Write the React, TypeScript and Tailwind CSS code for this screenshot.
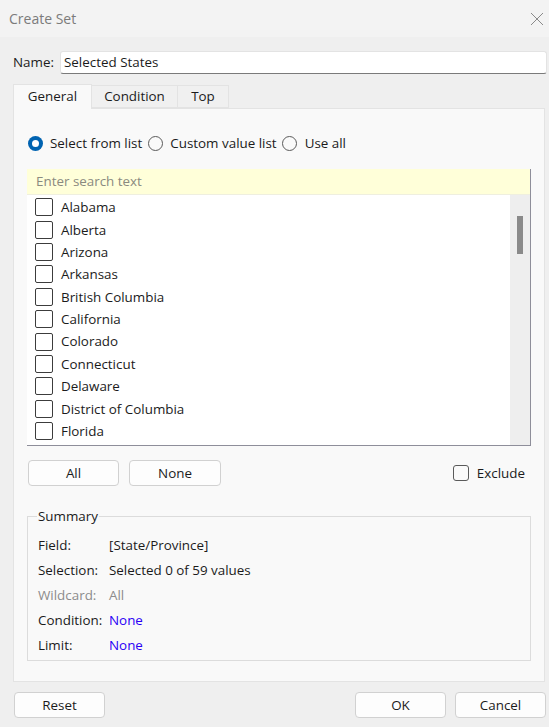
import React from 'react';

const states = [
  'Alabama',
  'Alberta',
  'Arizona',
  'Arkansas',
  'British Columbia',
  'California',
  'Colorado',
  'Connecticut',
  'Delaware',
  'District of Columbia',
  'Florida',
];

const Checkbox = () => (
  <span className="block w-[18px] h-[18px] border-[1.5px] border-[#3c3c3c] rounded-[2px] bg-white shrink-0" />
);

const Radio = ({ checked }: { checked?: boolean }) =>
  checked ? (
    <span className="flex items-center justify-center w-[15px] h-[15px] rounded-full bg-[#0063b1] shrink-0">
      <span className="block w-[7px] h-[7px] rounded-full bg-white" />
    </span>
  ) : (
    <span className="block w-[15px] h-[15px] rounded-full border border-[#5a5a5a] bg-[#fafafa] shrink-0" />
  );

const Button = ({ label, className = '' }: { label: string; className?: string }) => (
  <button
    className={`h-[26px] rounded-[4px] border border-[#d1d1d1] bg-[#fdfdfd] text-[#1b1b1b] ${className}`}
  >
    {label}
  </button>
);

const SummaryRow = ({ label, value, tone = 'normal' }: { label: string; value: string; tone?: 'normal' | 'muted' | 'link' }) => {
  const labelColor = tone === 'muted' ? 'text-[#8c8c8c]' : 'text-[#1b1b1b]';
  const valueColor = tone === 'muted' ? 'text-[#8c8c8c]' : tone === 'link' ? 'text-[#2a00f5]' : 'text-[#1b1b1b]';
  return (
    <div className="flex items-center h-[25px]">
      <span className={`w-[71px] ${labelColor}`}>{label}</span>
      <span className={valueColor}>{value}</span>
    </div>
  );
};

export default function App() {
  return (
    <div className="w-[549px] h-[727px] bg-[#efefef] flex flex-col text-[13.4px] text-[#1b1b1b] font-['Open_Sans',sans-serif] overflow-hidden">
      {/* title bar */}
      <div className="h-[37px] bg-[#f3f3f3] flex items-center justify-between pl-[9px] pr-[3px]">
        <span className="text-[#7b7b7b] text-[14px]">Create Set</span>
        <svg width="16" height="16" viewBox="0 0 16 16" className="mr-[1px]">
          <path d="M2 2 L14 14 M14 2 L2 14" stroke="#8a8a8a" strokeWidth="1" />
        </svg>
      </div>

      {/* name */}
      <div className="flex items-center pl-[13px] pr-[2px] mt-[14px]">
        <span className="w-[47px]">Name:</span>
        <div className="flex-1 h-[23px] bg-white border border-[#e3e3e3] border-b-[#7a7a7a] rounded-[3px] flex items-center px-[3px]">
          Selected States
        </div>
      </div>

      {/* tabs */}
      <div className="flex items-end ml-[13px] mt-[9px] h-[25px]">
        <div className="w-[79px] h-[25px] bg-[#f9f9f9] border border-b-0 border-[#e3e3e3] flex items-center justify-center relative z-10 -mb-px pb-[2px]">
          General
        </div>
        <div className="w-[86px] h-[23px] bg-[#f0f0f0] border border-l-0 border-[#e3e3e3] flex items-center justify-center">
          Condition
        </div>
        <div className="w-[51px] h-[23px] bg-[#f0f0f0] border border-l-0 border-[#e3e3e3] flex items-center justify-center">
          Top
        </div>
      </div>

      {/* panel */}
      <div className="ml-[13px] mr-[4px] h-[574px] bg-[#f9f9f9] border border-[#e3e3e3] flex flex-col px-[13px]">
        <div className="flex items-center mt-[26px] h-[16px]">
          <span className="ml-[1px]"><Radio checked /></span>
          <span className="ml-[7px] mr-[6px]">Select from list</span>
          <Radio />
          <span className="ml-[7px] mr-[5px]">Custom value list</span>
          <Radio />
          <span className="ml-[8px]">Use all</span>
        </div>

        {/* list */}
        <div className="mt-[18px] w-[504px] h-[277px] border border-[#8e8e9a] border-t-0 border-l-0 flex flex-col">
          <div className="h-[26px] bg-[#ffffd9] border-b border-[#efefdf] flex items-center pl-[9px] text-[#8a8a80] shrink-0">
            Enter search text
          </div>
          <div className="flex flex-1 min-h-0">
            <div className="flex-1 bg-white overflow-hidden pt-[1px]">
              {states.map((s) => (
                <div key={s} className="flex items-center h-[22.4px] pl-[8px] gap-[8px]">
                  <Checkbox />
                  <span>{s}</span>
                </div>
              ))}
            </div>
            <div className="w-[20px] bg-[#eeeeee] pt-[21px] flex justify-center">
              <div className="w-[6px] h-[38px] bg-[#8a8a8a]" />
            </div>
          </div>
        </div>

        {/* buttons row */}
        <div className="flex items-center mt-[14px]">
          <Button label="All" className="w-[91px] ml-[1px]" />
          <Button label="None" className="w-[92px] ml-[10px]" />
          <div className="ml-auto flex items-center gap-[8px] mr-[6px]">
            <span className="block w-[16px] h-[16px] rounded-[3px] border border-[#5a5a5a] bg-[#fafafa]" />
            <span>Exclude</span>
          </div>
        </div>

        {/* summary */}
        <fieldset className="mt-[20px] w-[504px] border border-[#dcdcdc] pl-[10px] pb-[3px] pt-[6px]">
          <legend className="px-[1px] -ml-[1px]">Summary</legend>
          <SummaryRow label="Field:" value="[State/Province]" />
          <SummaryRow label="Selection:" value="Selected 0 of 59 values" />
          <SummaryRow label="Wildcard:" value="All" tone="muted" />
          <SummaryRow label="Condition:" value="None" tone="link" />
          <SummaryRow label="Limit:" value="None" tone="link" />
        </fieldset>
      </div>

      {/* footer */}
      <div className="flex items-center mt-[10px] pl-[14px] pr-[3px]">
        <Button label="Reset" className="w-[91px] h-[26px]" />
        <Button label="OK" className="w-[91px] h-[26px] ml-auto" />
        <Button label="Cancel" className="w-[91px] h-[26px] ml-[9px]" />
      </div>
    </div>
  );
}
